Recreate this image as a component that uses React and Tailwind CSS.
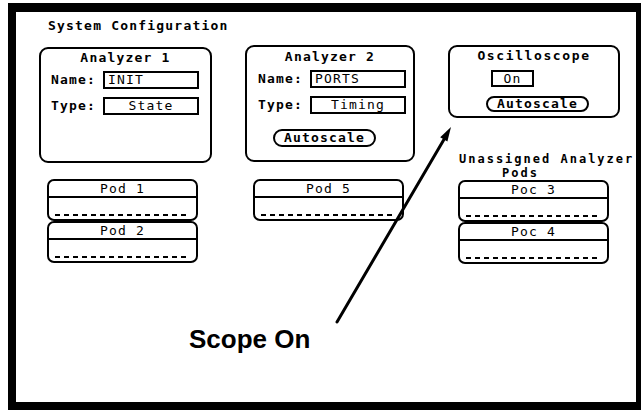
import React from 'react';

const mono = "font-['DejaVu_Sans_Mono','Liberation_Mono',monospace] text-[13px] tracking-[1.2px]";

const Field = ({ label, value, align = 'center', className = '' }) => (
    <div className={`flex items-center ${className}`}>
        <span className="w-[52px] font-bold leading-[16px]">{label}</span>
        <div className={`w-[96px] h-[18px] border-2 border-black flex items-center leading-[14px] ${align === 'left' ? 'pl-[3px]' : 'justify-center'}`}>
            {value}
        </div>
    </div>
);

const Autoscale = ({ className = '' }) => (
    <div className={`w-[103px] border-2 border-black rounded-full flex items-center justify-center font-bold leading-[14px] ${className}`}>
        Autoscale
    </div>
);

const Pod = ({ name }) => (
    <div className="w-[151px] h-[42px] border-2 border-black rounded-[7px] bg-white flex flex-col">
        <div className="h-[17px] border-b-2 border-black text-center leading-[15px]">{name}</div>
        <div className="mt-[16px] mx-[6px] h-[2px] bg-[repeating-linear-gradient(to_right,#000_0_5px,transparent_5px_9px)]" />
    </div>
);

export default function App() {
    return (
        <div className={`w-[641px] h-[410px] bg-white relative overflow-hidden text-black ${mono}`}>
            <div className="ml-[8px] mt-[3px] w-[633px] h-[407px] border-black border-l-[8px] border-t-[9px] border-r-[5px] border-b-[8px] flex flex-col">
                {/* Title */}
                <div className="pt-[6px] pl-[32px] font-bold leading-[16px]">System Configuration</div>

                {/* Three columns */}
                <div className="flex items-start pl-[23px] mt-[11px] gap-[33px]">
                    {/* Analyzer 1 */}
                    <div className="w-[173px] mt-[2px] flex flex-col">
                        <div className="h-[116px] border-2 border-black rounded-[9px] pt-[1px] pl-[10px] flex flex-col">
                            <div className="text-center pr-[10px] font-bold leading-[16px]">Analyzer 1</div>
                            <Field label="Name:" value="INIT" align="left" className="mt-[5px]" />
                            <Field label="Type:" value="State" className="mt-[8px]" />
                        </div>
                        <div className="ml-[8px] mt-[16px] flex flex-col">
                            <Pod name="Pod 1" />
                            <Pod name="Pod 2" />
                        </div>
                    </div>

                    {/* Analyzer 2 */}
                    <div className="w-[170px] flex flex-col">
                        <div className="h-[117px] border-2 border-black rounded-[9px] pt-[2px] pl-[11px] flex flex-col">
                            <div className="text-center pr-[11px] font-bold leading-[16px]">Analyzer 2</div>
                            <Field label="Name:" value="PORTS" align="left" className="mt-[5px]" />
                            <Field label="Type:" value="Timing" className="mt-[8px]" />
                            <Autoscale className="h-[18px] mt-[15px] ml-[15px]" />
                        </div>
                        <div className="ml-[8px] mt-[17px]">
                            <Pod name="Pod 5" />
                        </div>
                    </div>

                    {/* Oscilloscope + unassigned */}
                    <div className="w-[172px] flex flex-col">
                        <div className="h-[73px] border-2 border-black rounded-[9px] pt-[1px] flex flex-col">
                            <div className="text-center font-bold leading-[16px] tracking-[1.6px]">Oscilloscope</div>
                            <div className="mt-[6px] ml-[41px] w-[43px] h-[17px] border-2 border-black flex items-center justify-center leading-[13px]">On</div>
                            <Autoscale className="h-[16px] mt-[9px] ml-[36px]" />
                        </div>
                        <div className="mt-[34px] ml-[11px] font-bold text-[12px] tracking-[2px] leading-[14px] whitespace-nowrap">
                            <div>Unassigned Analyzer</div>
                            <div className="pl-[43px]">Pods</div>
                        </div>
                        <div className="ml-[10px] flex flex-col">
                            <Pod name="Poc 3" />
                            <Pod name="Poc 4" />
                        </div>
                    </div>
                </div>
            </div>

            {/* Callout */}
            <svg className="absolute left-0 top-0" width="641" height="410" viewBox="0 0 641 410">
                <line x1="337" y1="322" x2="446" y2="136" stroke="#000" strokeWidth="3" strokeLinecap="round" />
                <polygon points="451,127 447.4,141.5 440.2,137.3" fill="#000" />
            </svg>
            <div className="absolute left-[189px] top-[324px] font-['Liberation_Sans',Arial,sans-serif] font-bold text-[26px] leading-[30px] tracking-normal">
                Scope On
            </div>
        </div>
    );
}
